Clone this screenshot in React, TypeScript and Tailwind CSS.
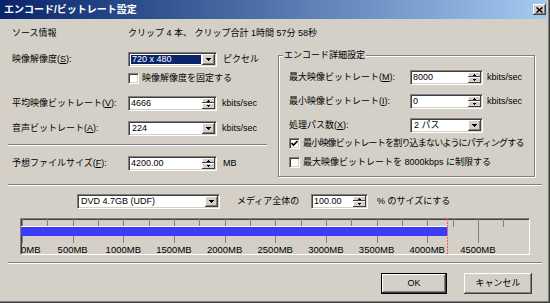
import React from 'react'

const raised = 'bg-[#d4d0c8] shadow-[inset_-1px_-1px_0_#404040,inset_1px_1px_0_#ffffff,inset_-2px_-2px_0_#808080]'
const raisedSm = 'bg-[#d4d0c8] shadow-[inset_-1px_-1px_0_#404040,inset_1px_1px_0_#ffffff]'
const sunken = 'border border-t-[#808080] border-l-[#808080] border-b-white border-r-white shadow-[inset_1px_1px_0_#404040,inset_-1px_-1px_0_#d4d0c8]'
const sep = 'h-[2px] border-t border-t-[#808080] border-b border-b-white'

function Tri({ up, w = 5 }: { up?: boolean; w?: number }) {
  const h = Math.ceil(w / 2)
  return (
    <svg width={w} height={h} viewBox={`0 0 ${w} ${h}`} shapeRendering="crispEdges">
      <path d={up ? `M${w / 2} 0L${w} ${h}H0Z` : `M0 0H${w}L${w / 2} ${h}Z`} fill="#000" />
    </svg>
  )
}

function Field({ value, className, spin }: { value: string; className: string; spin?: boolean }) {
  return (
    <div className={`flex h-[15px] bg-white p-[1px] ${sunken} ${className}`}>
      <div className="flex-1 flex items-center pl-[1px] overflow-hidden whitespace-nowrap">{value}</div>
      {spin && (
        <div className="flex flex-col w-[13px]">
          <div className={`h-[5px] flex items-center justify-center ${raisedSm}`}><Tri up w={3} /></div>
          <div className={`h-[6px] flex items-center justify-center ${raisedSm}`}><Tri w={3} /></div>
        </div>
      )}
    </div>
  )
}

function Combo({ value, className, selected }: { value: string; className: string; selected?: boolean }) {
  return (
    <div className={`flex h-[15px] bg-white p-[1px] ${sunken} ${className}`}>
      <div className="flex-1 flex p-[1px]">
        <div className={`flex-1 flex items-center pl-[1px] whitespace-nowrap ${selected ? 'bg-[#0a246a] text-white' : ''}`}>{value}</div>
      </div>
      <div className={`w-[13px] flex items-center justify-center ${raised}`}><Tri w={5} /></div>
    </div>
  )
}

function Check({ checked }: { checked?: boolean }) {
  return (
    <div className={`w-[11px] h-[11px] shrink-0 bg-white flex items-center justify-center ${sunken}`}>
      {checked && (
        <svg width="7" height="7" viewBox="0 0 7 7">
          <path d="M0.5 3L2.5 5L6.5 1" stroke="#000" strokeWidth="1.6" fill="none" />
        </svg>
      )}
    </div>
  )
}

const X = (mb: number) => 1 + mb * 0.1013

function Ruler() {
  const ticks = Array.from({ length: 20 }, (_, i) => i * 250)
  const labels = Array.from({ length: 10 }, (_, i) => i * 500)
  const end = X(4200)
  return (
    <div className={`ml-[12px] mt-[9px] w-[510px] h-[37px] ${sunken}`}>
      <svg width="508" height="35" className="block">
        {ticks.map(mb => (
          <line key={mb} x1={Math.round(X(mb)) + 0.5} x2={Math.round(X(mb)) + 0.5} y1="0" y2={mb % 500 === 0 ? 24 : 8} stroke="#808080" />
        ))}
        <rect x="0" y="7" width={end} height="1" fill="#ffffff" />
        <rect x="0" y="8" width={end} height="9" fill="#3c3cf8" />
        {labels.map(mb => (
          <text key={mb} x={mb === 0 ? 0 : X(mb)} y="34" textAnchor={mb === 0 ? 'start' : 'middle'} fontSize="9.5" fontFamily="Liberation Sans, sans-serif" fill="#000">
            {mb}MB
          </text>
        ))}
        <line x1={Math.round(end) + 0.5} x2={Math.round(end) + 0.5} y1="0" y2="35" stroke="#ff5a5a" strokeDasharray="2 1" />
      </svg>
    </div>
  )
}

export default function App() {
  return (
    <div className="w-[550px] h-[303px] bg-[#d4d0c8] border-r border-b border-[#404040] text-[9px] text-black leading-none whitespace-nowrap font-['Liberation_Sans','Noto_Sans_CJK_JP',sans-serif]">
      <div className="h-full border-r border-b border-[#808080] flex flex-col">
        <div className="h-[19px] mr-[1px] flex items-center justify-between pl-[4px] pr-[1px] bg-linear-to-r from-[#0a246a] to-[#a6caf0]">
          <span className="text-white font-bold text-[10px]">エンコード/ビットレート設定</span>
          <div className={`w-[13px] h-[11px] flex items-center justify-center ${raised}`}>
            <svg width="7" height="6" viewBox="0 0 7 6">
              <path d="M0.5 0.5L6.5 5.5M6.5 0.5L0.5 5.5" stroke="#000" strokeWidth="1.6" />
            </svg>
          </div>
        </div>

        <div className="pl-[8px] flex flex-col">
          <div className="mt-[7px] h-[15px] flex items-center pl-[4px]">
            <span className="w-[116px]">ソース情報</span>
            <span>クリップ 4 本、 クリップ合計 1時間 57分 58秒</span>
          </div>

          <div className="flex h-[143px]">
            <div className="w-[270px] flex flex-col">
              <div className="mt-[11px] h-[15px] flex items-center pl-[4px]">
                <span className="w-[116px]">映像解像度(<u>S</u>):</span>
                <Combo value="720 x 480" selected className="w-[89px]" />
                <span className="ml-[6px]">ピクセル</span>
              </div>
              <div className="mt-[5px] h-[12px] flex items-center pl-[120px]">
                <Check />
                <span className="ml-[3px]">映像解像度を固定する</span>
              </div>
              <div className="mt-[12px] h-[15px] flex items-center pl-[4px]">
                <span className="w-[116px]">平均映像ビットレート(<u>V</u>):</span>
                <Field value="4666" spin className="w-[89px]" />
                <span className="ml-[5px]">kbits/sec</span>
              </div>
              <div className="mt-[10px] h-[15px] flex items-center pl-[4px]">
                <span className="w-[116px]">音声ビットレート(<u>A</u>):</span>
                <Combo value="224" className="w-[89px]" />
                <span className="ml-[5px]">kbits/sec</span>
              </div>
              <div className={`mt-[8px] w-[259px] ${sep}`} />
              <div className="mt-[10px] h-[15px] flex items-center pl-[4px]">
                <span className="w-[116px]">予想ファイルサイズ(<u>F</u>):</span>
                <Field value="4200.00" spin className="w-[89px]" />
                <span className="ml-[6px]">MB</span>
              </div>
            </div>

            <div className="w-[257px] h-[122px] mt-[14px] border border-[#808080] shadow-[inset_1px_1px_0_#ffffff,1px_1px_0_#ffffff] flex flex-col">
              <div className="-mt-[6px] ml-[4px] px-[1px] w-fit h-[11px] flex items-center bg-[#d4d0c8]">エンコード詳細設定</div>
              <div className="mt-[9px] h-[15px] flex items-center pl-[10px]">
                <span className="w-[121px]">最大映像ビットレート(<u>M</u>):</span>
                <Field value="8000" spin className="w-[73px]" />
                <span className="ml-[4px]">kbits/sec</span>
              </div>
              <div className="mt-[9px] h-[15px] flex items-center pl-[10px]">
                <span className="w-[121px]">最小映像ビットレート(<u>I</u>):</span>
                <Field value="0" spin className="w-[73px]" />
                <span className="ml-[4px]">kbits/sec</span>
              </div>
              <div className="mt-[9px] h-[15px] flex items-center pl-[10px]">
                <span className="w-[121px]">処理パス数(<u>X</u>):</span>
                <Combo value="2 パス" className="w-[73px]" />
              </div>
              <div className="mt-[4px] h-[13px] flex items-center pl-[10px]">
                <Check checked />
                <span className="ml-[3px] tracking-[-0.8px]">最小映像ビットレートを割り込まないようにパディングする</span>
              </div>
              <div className="mt-[6px] h-[13px] flex items-center pl-[10px]">
                <Check />
                <span className="ml-[3px]">最大映像ビットレートを 8000kbps に制限する</span>
              </div>
            </div>
          </div>

          <div className={`w-[534px] ${sep}`} />

          <div className="mt-[8px] h-[15px] flex items-center">
            <Combo value="DVD 4.7GB (UDF)" className="ml-[69px] w-[143px]" />
            <span className="ml-[17px] w-[74px]">メディア全体の</span>
            <Field value="100.00" spin className="w-[57px]" />
            <span className="ml-[9px]">% のサイズにする</span>
          </div>

          <Ruler />

          <div className={`mt-[7px] w-[534px] ${sep}`} />

          <div className="mt-[9px] flex">
            <div className="ml-[373px] w-[66px] h-[21px] border border-black">
              <div className={`h-full flex items-center justify-center ${raised}`}>OK</div>
            </div>
            <div className={`ml-[17px] w-[68px] h-[21px] flex items-center justify-center ${raised}`}>キャンセル</div>
          </div>
        </div>
      </div>
    </div>
  )
}
